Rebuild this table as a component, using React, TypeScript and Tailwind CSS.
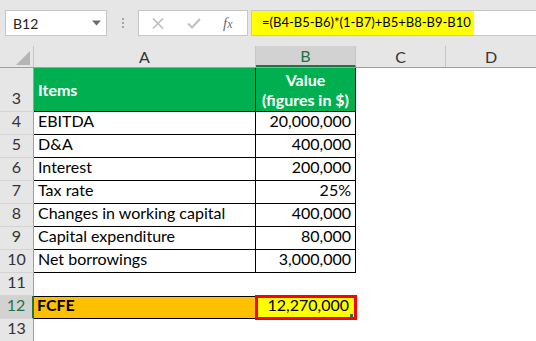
import React from 'react'

const font = { fontFamily: 'Lato, "Liberation Sans", sans-serif' }

const rows: { n: number; label: string; value: string }[] = [
  { n: 4, label: 'EBITDA', value: '20,000,000' },
  { n: 5, label: 'D&A', value: '400,000' },
  { n: 6, label: 'Interest', value: '200,000' },
  { n: 7, label: 'Tax rate', value: '25%' },
  { n: 8, label: 'Changes in working capital', value: '400,000' },
  { n: 9, label: 'Capital expenditure', value: '80,000' },
  { n: 10, label: 'Net borrowings', value: '3,000,000' },
]

const rowHead =
  'w-[34px] shrink-0 flex items-end justify-center pb-[1px] bg-[#e6e6e6] border-r border-b border-r-[#9f9f9f] border-b-[#d4d4d4] text-[16px] text-[#333]'

const RowHead: React.FC<{ n: number; selected?: boolean }> = ({ n, selected }) => (
  <div
    className={
      selected
        ? 'w-[34px] shrink-0 flex items-end justify-center pb-[1px] bg-[#d2d2d2] border-r-2 border-b border-r-[#217346] border-b-[#d4d4d4] text-[16px] text-[#217346]'
        : rowHead
    }
  >
    {n}
  </div>
)

const Toolbar: React.FC = () => (
  <div className="h-[46px] flex items-start pt-[10px] bg-[#e6e6e6]">
    <div className="ml-[5px] w-[102px] h-[26px] bg-white border border-[#c6c6c6] flex items-center justify-between pl-[7px] pr-[5px]">
      <span className="text-[14px] text-[#222]">B12</span>
      <svg width="9" height="6" viewBox="0 0 9 6">
        <path d="M0 0.5 H9 L4.5 5.5 Z" fill="#6d6d6d" />
      </svg>
    </div>
    <div className="w-[31px] h-[26px] flex flex-col items-center justify-center gap-[2px]">
      <span className="w-[2px] h-[2px] bg-[#a6a6a6]" />
      <span className="w-[2px] h-[2px] bg-[#a6a6a6]" />
      <span className="w-[2px] h-[2px] bg-[#a6a6a6]" />
    </div>
    <div className="w-[110px] h-[26px] bg-white border border-[#c6c6c6] flex items-center">
      <svg className="ml-[13px]" width="12" height="11" viewBox="0 0 12 11">
        <path d="M1 0.5 L11 10.5 M11 0.5 L1 10.5" stroke="#bfbfbf" strokeWidth="1.6" />
      </svg>
      <svg className="ml-[23px]" width="14" height="11" viewBox="0 0 14 11">
        <path d="M1 5.5 L5 9.5 L13 1" stroke="#bfbfbf" strokeWidth="2" fill="none" />
      </svg>
      <span
        className="ml-[22px] text-[15px] italic text-[#6e6e6e] leading-none"
        style={{ fontFamily: '"Liberation Serif", serif' }}
      >
        f<span className="text-[12px]">x</span>
      </span>
    </div>
    <div className="ml-[3px] flex-1 h-[26px] bg-white border border-[#c6c6c6] border-r-0 flex">
      <div className="w-[222px] h-full bg-[#ffff00] flex items-center pl-[10px] text-[13px] text-black whitespace-nowrap">
        =(B4-B5-B6)*(1-B7)+B5+B8-B9-B10
      </div>
    </div>
  </div>
)

const ColHeads: React.FC = () => (
  <div className="h-[22px] flex bg-[#e6e6e6] border-b border-[#9f9f9f] text-[16px] text-[#333]">
    <div className="w-[34px] shrink-0 relative border-r border-[#c6c6c6]">
      <svg className="absolute right-[3px] bottom-[2px]" width="14" height="14" viewBox="0 0 14 14">
        <path d="M14 0 V14 H0 Z" fill="#b5b5b5" />
      </svg>
    </div>
    <div className="w-[222px] shrink-0 flex items-center justify-center border-r border-[#c6c6c6]">A</div>
    <div className="w-[100px] shrink-0 flex items-center justify-center bg-[#d2d2d2] border-r border-[#c6c6c6] border-b-2 border-b-[#217346] text-[#217346]">
      B
    </div>
    <div className="w-[90px] shrink-0 flex items-center justify-center border-r border-[#c6c6c6]">C</div>
    <div className="flex-1 flex items-center justify-center">D</div>
  </div>
)

export default function App() {
  return (
    <div className="w-[536px] h-[341px] overflow-hidden bg-white" style={font}>
      <Toolbar />
      <ColHeads />

      <div className="h-[44px] flex">
        <RowHead n={3} />
        <div className="w-[222px] shrink-0 bg-[#00b050] border-r border-b border-black flex items-center pl-[4px] text-[16px] font-bold text-white">
          Items
        </div>
        <div className="w-[100px] shrink-0 bg-[#00b050] border-r border-b border-black flex flex-col items-center justify-center text-[16px] font-bold text-white leading-[20px]">
          <span>Value</span>
          <span>(figures in $)</span>
        </div>
      </div>

      {rows.map((r) => (
        <div key={r.n} className="h-[23px] flex">
          <RowHead n={r.n} />
          <div className="w-[222px] shrink-0 border-r border-b border-black flex items-end pb-[1px] pl-[4px] text-[16px] text-black whitespace-nowrap">
            {r.label}
          </div>
          <div className="w-[100px] shrink-0 border-r border-b border-black flex items-end justify-end pb-[1px] pr-[4px] text-[16px] text-black">
            {r.value}
          </div>
        </div>
      ))}

      <div className="h-[23px] flex">
        <RowHead n={11} />
      </div>

      <div className="h-[23px] flex">
        <RowHead n={12} selected />
        <div className="w-[222px] shrink-0 bg-[#ffc000] border-y border-black flex items-end pb-[1px] pl-[3px] text-[16px] font-bold text-black">
          FCFE
        </div>
        <div className="w-[100px] shrink-0 relative bg-[#ffff00] border-y border-black flex items-end justify-end pb-[1px] pr-[7px] text-[16px] text-black">
          12,270,000
          <div className="absolute -left-[1px] -top-[2px] -right-[1px] -bottom-[2px] border-[3px] border-[#ff0000]" />
          <div className="absolute right-[3px] bottom-[1px] w-[3px] h-[3px] bg-[#217346]" />
        </div>
      </div>

      <div className="h-[23px] flex">
        <RowHead n={13} />
      </div>
    </div>
  )
}
